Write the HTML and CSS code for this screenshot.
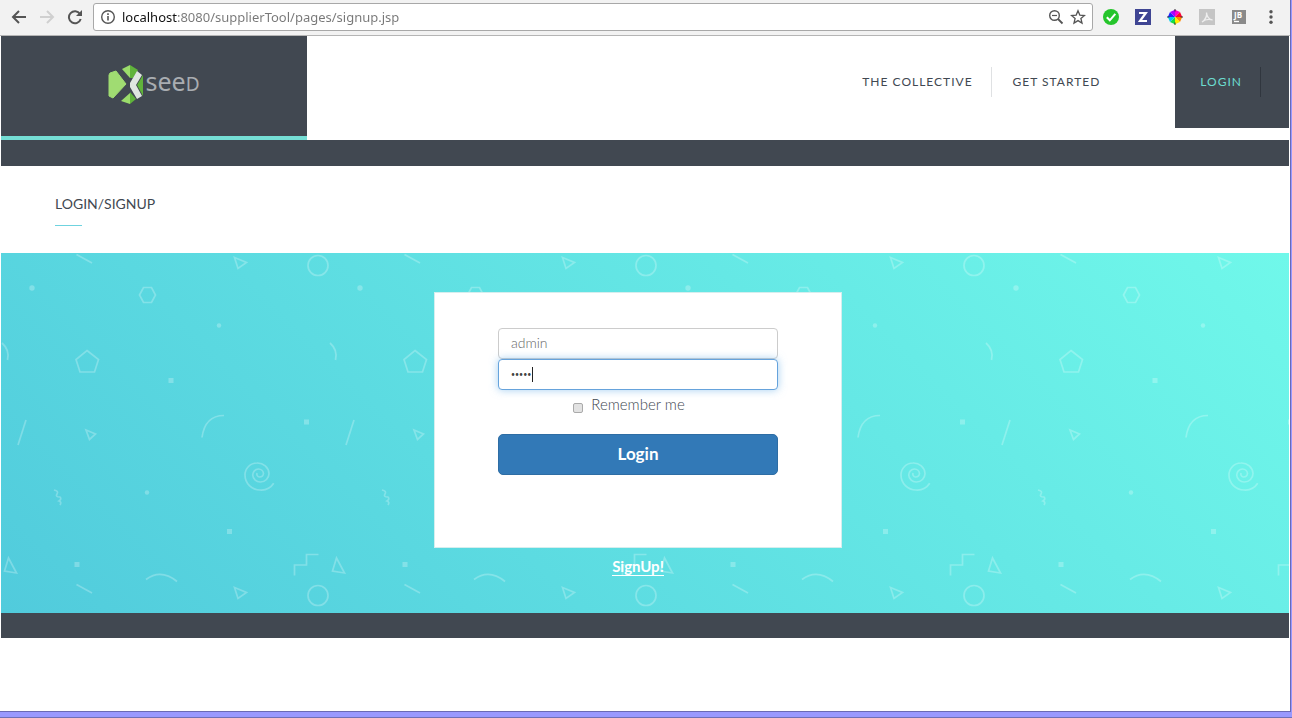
FILE: index.html
```
<!DOCTYPE html>
<html lang="en">
<head>
<meta charset="utf-8">
<title>Login/Signup</title>
<link rel="stylesheet" href="styles.css">
</head>
<body>
<div class="window">
  <div class="toolbar">
    <button class="tool" type="button" aria-label="Back"><svg width="16" height="16" viewBox="0 0 16 16"><path d="M15 8H2M8 2L2 8l6 6" fill="none" stroke="#555" stroke-width="2"/></svg></button>
    <button class="tool" type="button" aria-label="Forward"><svg width="16" height="16" viewBox="0 0 16 16"><path d="M1 8h13M8 2l6 6-6 6" fill="none" stroke="#d0d0d0" stroke-width="2"/></svg></button>
    <button class="tool" type="button" aria-label="Reload"><svg width="16" height="16" viewBox="0 0 16 16"><path d="M13 5A6 6 0 1 0 13.700 10" fill="none" stroke="#555" stroke-width="2"/><path d="M15 1v6H9z" fill="#555"/></svg></button>
    <div class="address">
      <svg width="16" height="16" viewBox="0 0 16 16"><circle cx="8" cy="8" r="6.300" fill="none" stroke="#555" stroke-width="1.400"/><path d="M8 7v4.500M8 4.300v1.700" stroke="#555" stroke-width="1.600"/></svg>
      <input class="url" type="text" aria-label="Address" value="localhost:8080/supplierTool/pages/signup.jsp">
      <button class="tool" type="button" aria-label="Zoom"><svg width="16" height="16" viewBox="0 0 16 16"><circle cx="6.500" cy="6.500" r="4.800" fill="none" stroke="#555" stroke-width="1.400"/><path d="M4 6.500h5" stroke="#555" stroke-width="1.200"/><path d="M10 10l4.500 4.500" stroke="#555" stroke-width="1.800"/></svg></button>
      <button class="tool" type="button" aria-label="Bookmark"><svg width="16" height="16" viewBox="0 0 16 16"><path d="M8 1.800l1.800 4.300 4.700.4-3.600 3 1.100 4.600L8 11.600l-4 2.500 1.100-4.600-3.600-3 4.700-.4z" fill="none" stroke="#555" stroke-width="1.300"/></svg></button>
    </div>
    <div class="extensions">
      <button class="tool" type="button" aria-label="Check"><svg width="16" height="16" viewBox="0 0 16 16"><circle cx="8" cy="8" r="8" fill="#25c52b"/><path d="M3.800 8.300l3 3 5.500-6.500" fill="none" stroke="#fff" stroke-width="2"/></svg></button>
      <button class="tool" type="button" aria-label="Z extension"><svg width="16" height="16" viewBox="0 0 16 16"><path d="M0 0h16v16H0z" fill="#3f4593"/><path d="M4 4h6.800L5 12h7" fill="none" stroke="#fff" stroke-width="2.200"/></svg></button>
      <button class="tool" type="button" aria-label="Colour picker"><svg width="16" height="16" viewBox="0 0 16 16"><path d="M8 8V.8l5 2.200z" fill="#f0c"/><path d="M8 8l5-5 2.200 5z" fill="#f03"/><path d="M8 8h7.200L13 13z" fill="#f80"/><path d="M8 8l5 5-5 2.200z" fill="#fe0"/><path d="M8 8v7.200L3 13z" fill="#1d4"/><path d="M8 8l-5 5L.8 8z" fill="#0ce"/><path d="M8 8H.8L3 3z" fill="#22f"/><path d="M8 8L3 3 8 .8z" fill="#a0f"/><path d="M8 0v2.500M8 13.500V16M0 8h2.500M13.500 8H16" stroke="#333" stroke-width="1"/></svg></button>
      <button class="tool" type="button" aria-label="PDF"><svg width="16" height="16" viewBox="0 0 16 16"><path d="M0 0h16v16H0z" fill="#c5c5c5"/><path d="M3 13c3-2 5-6 4.500-9.500C8 8 10 10.500 13.500 11 10 10 6 10.500 3 13z" fill="none" stroke="#eee" stroke-width="1.300"/></svg></button>
      <button class="tool" type="button" aria-label="JB"><svg width="16" height="16" viewBox="0 0 16 16"><path d="M1 1h14v14H1z" fill="#8a8a8a"/><path d="M3 12.500h5" stroke="#fff" stroke-width="1.300"/><text x="3" y="9" class="jb">JB</text></svg></button>
      <button class="tool" type="button" aria-label="Menu"><svg width="16" height="16" viewBox="0 0 16 16"><g fill="#555"><circle cx="8" cy="2.700" r="1.700"/><circle cx="8" cy="8" r="1.700"/><circle cx="8" cy="13.300" r="1.700"/></g></svg></button>
    </div>
  </div>

  <header class="site-header">
    <a class="brand" href="#" aria-label="Xseed">
      <svg width="36" height="40" viewBox="0 0 36 40">
        <path d="M2 8l6-2 10 13L5 33l-4-2V10z" fill="#a0dc72" stroke="#a0dc72" stroke-linejoin="round"/>
        <path d="M14 4l8-4v13z" fill="#9bdd6b"/><path d="M22 0l8 5-5 8h-3z" fill="#60b33b"/>
        <path d="M22 28v11l-9-3z" fill="#9bdd6b"/><path d="M22 27l6 7-6 5z" fill="#60b33b"/>
        <path d="M35 10v21l-6-11z" fill="#60b33b"/>
        <path d="M29 6l5 4-6 10 6 11-5 3-7-12v-4z" fill="#dfe6e0"/>
      </svg>
      <span class="brand-name">see<span class="brand-cap">D</span></span>
    </a>
    <nav class="nav">
      <a class="nav-link divided" href="#">THE COLLECTIVE</a>
      <a class="nav-link" href="#">GET STARTED</a>
    </nav>
    <div class="login-tab"><a class="nav-link divided" href="#">LOGIN</a></div>
  </header>
  <div class="band"></div>
  <div class="title"><h1>LOGIN/SIGNUP</h1></div>

  <main class="hero">
    <svg class="pattern" width="100%" height="100%" aria-hidden="true">
      <defs>
        <pattern id="doodles" width="328" height="330" patternUnits="userSpaceOnUse">
          <g transform="translate(-1 -253)" fill="none" stroke="#fff" stroke-width="1.700">
            <path d="M76.500 254.500L92 263"/>
            <path d="M234.500 257.500l12 5-8.500 6z"/>
            <circle cx="318" cy="265.500" r="10"/>
            <path d="M139.500 295l4-7.500h8l4 7.500-4 7.500h-8z"/>
            <path d="M2 343q8 7 5.500 17"/>
            <path d="M87 350.500l11.500 9-4 12.500H80l-4-12.500z"/>
            <path d="M26 420l-8 25"/>
            <path d="M86 430l9.500 4-6 5.500z"/>
            <path d="M224 415.500q-19 0-22 22"/>
            <path d="M273.700 483.300A15 15 0 0 1 260 490A15 15 0 0 1 245 475A12 12 0 0 1 257 463A11.500 11 0 0 1 269 473.500A8.500 8.500 0 0 1 260.500 482A7.500 7.500 0 0 1 252.700 475A6 6 0 0 1 258.500 469A5 5 0 0 1 263.500 473.500A4 4 0 0 1 259.500 477A3 3 0 0 1 257 473"/>
            <path d="M54 490q5 1 3 4t3 3q2 2-1 4 3 1 1 4"/>
            <path d="M294.500 575.500V565h12v-10.500h12"/>
            <path d="M8.500 558l8 15-12-2z"/>
            <path d="M146 579.500q15-11 31 2"/>
            <g fill="#fff" stroke="none">
              <circle cx="32" cy="288" r="2.700"/><circle cx="219" cy="325.500" r="2.200"/>
              <path d="M168.500 378h5v5h-5zM304 419.500h5v5h-5zM227 529h5v5h-5zM74.500 562h5v5h-5z"/>
              <circle cx="147" cy="492.500" r="2.200"/>
            </g>
          </g>
        </pattern>
      </defs>
      <rect width="100%" height="100%" fill="url(#doodles)" opacity=".25"/>
    </svg>
    <form class="card">
      <input class="field" type="text" aria-label="User name" placeholder="admin">
      <div class="password">
        <input class="field active" type="password" aria-label="Password" value="admin">
        <span class="caret"></span>
      </div>
      <label class="remember"><input class="tick" type="checkbox">Remember me</label>
      <button class="submit" type="button">Login</button>
    </form>
    <a class="signup" href="#">SignUp!</a>
  </main>
  <footer class="footer"></footer>
</div>
</body>
</html>
```
FILE: styles.css
```
* { box-sizing: border-box; }
body {
  margin: 0;
  min-height: 100vh;
  display: flex;
  flex-direction: column;
  background: #9999ff;
  border-bottom: 1px solid #6f70b8;
  font-family: Lato, sans-serif;
  color: #414851;
}
.window {
  flex: 1;
  margin: 0 1px 5px 0;
  background: #fff;
  border: solid #6a6ab5;
  border-width: 0 1px 1px 0;
  padding: 0 1px 0 1px;
}
a { color: inherit; text-decoration: none; }

.toolbar {
  display: flex;
  align-items: center;
  gap: 12px;
  height: 36px;
  margin: 0 -1px;
  padding: 0 11px 2px 11px;
  background: #f2f2f2;
  border-bottom: 1px solid #b5b5b5;
}
.tool {
  display: flex;
  padding: 0;
  border: 0;
  background: none;
}
.address {
  flex: 1;
  display: flex;
  align-items: center;
  gap: 6px;
  height: 28px;
  margin-left: -2px;
  padding: 0 6px;
  background: #fff;
  border: 1px solid #a8a8a8;
  border-radius: 3px;
}
.url {
  flex: 1;
  min-width: 0;
  padding: 0;
  border: 0;
  outline: 0;
  font: 13px "Noto Sans", sans-serif;
  color: transparent;
  background: linear-gradient(90deg, #111 56px, #777 56px);
  -webkit-background-clip: text;
  background-clip: text;
}
.extensions { display: flex; gap: 16px; margin-left: -2px; }
.jb { font: bold 8px "Open Sans", sans-serif; fill: #fff; }

.site-header { display: flex; align-items: flex-start; }
.brand {
  display: flex;
  align-items: center;
  justify-content: center;
  gap: 1px;
  width: 306px;
  height: 104px;
  padding-bottom: 2px;
  background: #414851;
  border-bottom: 4px solid #75ded5;
}
.brand-name {
  padding-bottom: 6px;
  font: 25px/32px "Noto Sans", sans-serif;
  color: #a9adb1;
}
.brand-cap { font-size: 19px; }
.nav {
  flex: 1;
  display: flex;
  align-items: center;
  justify-content: flex-end;
  height: 92px;
  padding-right: 57px;
}
.nav-link {
  padding: 0 18px 0 21px;
  font-size: 12px;
  line-height: 30px;
  letter-spacing: 1px;
}
.divided { border-right: 1px solid #dfe1e3; }
.login-tab {
  display: flex;
  align-items: center;
  height: 92px;
  padding: 0 28px 0 4px;
  background: #414851;
  color: #6cdccf;
}
.login-tab .divided { border-color: #30363e; }

.band { height: 26px; background: #414851; }
.title { padding: 28px 54px 27px; }
.title h1 { margin: 0; font-size: 14px; font-weight: 400; line-height: 20px; }
.title h1::after {
  content: "";
  display: block;
  width: 27px;
  height: 1px;
  margin-top: 11px;
  background: #6fd3df;
}

.hero {
  position: relative;
  display: flex;
  flex-direction: column;
  align-items: center;
  padding: 39px 14px 37px 0;
  background: linear-gradient(45deg, #51cbdc, #70f8ea);
}
.pattern { position: absolute; inset: 0; }
.card {
  position: relative;
  display: flex;
  flex-direction: column;
  width: 408px;
  max-width: 100%;
  padding: 35px 63px 72px;
  background: #fff;
  border: 1px solid #d5eeee;
}
.field {
  display: block;
  width: 100%;
  height: 31px;
  padding: 0 12px 2px;
  border: 1px solid #ccc;
  border-radius: 4px;
  background: #fff;
  color: #444;
  font: 14px Lato, sans-serif;
  outline: 0;
}
.field::placeholder { color: #666; font-weight: 300; }
.password { position: relative; }
.active {
  border-color: #66a3dc;
  box-shadow: 0 0 8px rgba(102, 175, 233, .6);
  font-size: 7px;
}
.caret {
  position: absolute;
  left: 34px;
  top: 8px;
  width: 1px;
  height: 15px;
  background: #222;
}
.remember {
  display: flex;
  align-items: center;
  justify-content: center;
  gap: 8px;
  margin: 4px 18px 20px 0;
  font-size: 15px;
  font-weight: 300;
  line-height: 20px;
}
.tick {
  appearance: none;
  width: 10px;
  height: 10px;
  margin: 7px 0 0;
  border: 1px solid #aaa;
  border-radius: 2px;
  background: #e2e2e2;
}
.submit {
  height: 41px;
  padding: 0 0 2px;
  border: 1px solid #2e6da4;
  border-radius: 5px;
  background: #3279b7;
  color: #fff;
  font: bold 17px Lato, sans-serif;
}
.signup {
  position: relative;
  margin-top: 10px;
  border-bottom: 1px solid #fff;
  color: #fff;
  font-size: 15px;
  font-weight: 700;
  line-height: 17px;
}
.footer { height: 25px; background: #414851; }
```
